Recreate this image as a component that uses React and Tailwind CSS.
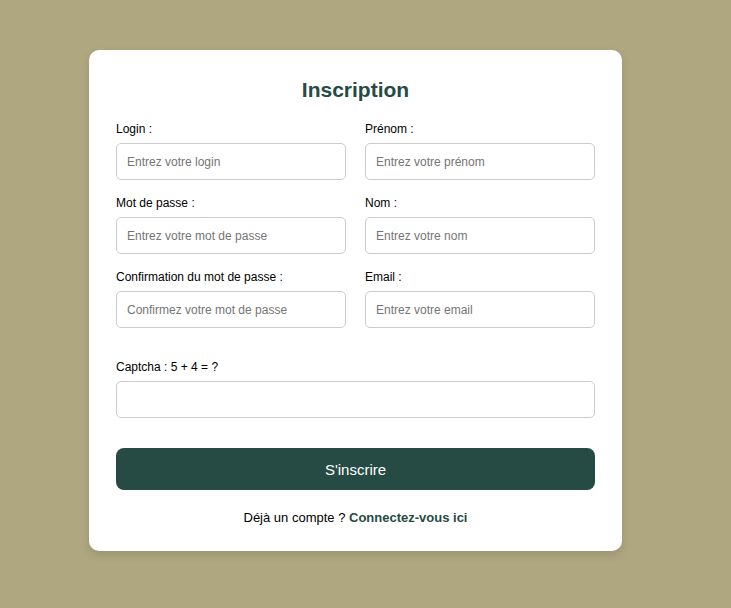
export default function App() {
  const fields = [
    { label: "Login :", ph: "Entrez votre login" },
    { label: "Prénom :", ph: "Entrez votre prénom" },
    { label: "Mot de passe :", ph: "Entrez votre mot de passe" },
    { label: "Nom :", ph: "Entrez votre nom" },
    { label: "Confirmation du mot de passe :", ph: "Confirmez votre mot de passe" },
    { label: "Email :", ph: "Entrez votre email" },
  ];
  return (
    <div className="min-h-[608px] bg-[#afa780] pl-[89px] pt-[50px] font-['Liberation_Sans',Arial,sans-serif]">
      <div className="w-[533px] rounded-[10px] bg-white px-[27px] pt-[28px] pb-[26px] shadow-[0_4px_10px_rgba(0,0,0,0.12)]">
        <h1 className="text-center text-[21px] font-bold leading-[24px] text-[#264a44]">Inscription</h1>
        <div className="mt-[20px] grid grid-cols-2 gap-x-[19px] gap-y-[16px]">
          {fields.map((f) => (
            <div key={f.label} className="flex flex-col">
              <label className="mb-[6px] block text-[12px] leading-[15px] text-black">{f.label}</label>
              <input
                placeholder={f.ph}
                className="h-[37px] w-full rounded-[5px] border border-[#cccccc] px-[10px] text-[12px] text-black outline-none placeholder:text-[#757575]"
              />
            </div>
          ))}
        </div>
        <div className="mt-[32px] flex flex-col">
          <label className="mb-[6px] block text-[12px] leading-[15px] text-black">Captcha : 5 + 4 = ?</label>
          <input className="h-[37px] w-full rounded-[5px] border border-[#cccccc] px-[10px] text-[12px] outline-none" />
        </div>
        <button className="mt-[30px] flex h-[42px] w-full items-center justify-center rounded-[8px] bg-[#264a44] pt-[2px] text-[15px] text-white">
          S'inscrire
        </button>
        <p className="mt-[20px] text-center text-[13px] leading-[15px] text-black">
          Déjà un compte ? <a className="font-bold text-[#264a44]">Connectez-vous ici</a>
        </p>
      </div>
    </div>
  );
}
